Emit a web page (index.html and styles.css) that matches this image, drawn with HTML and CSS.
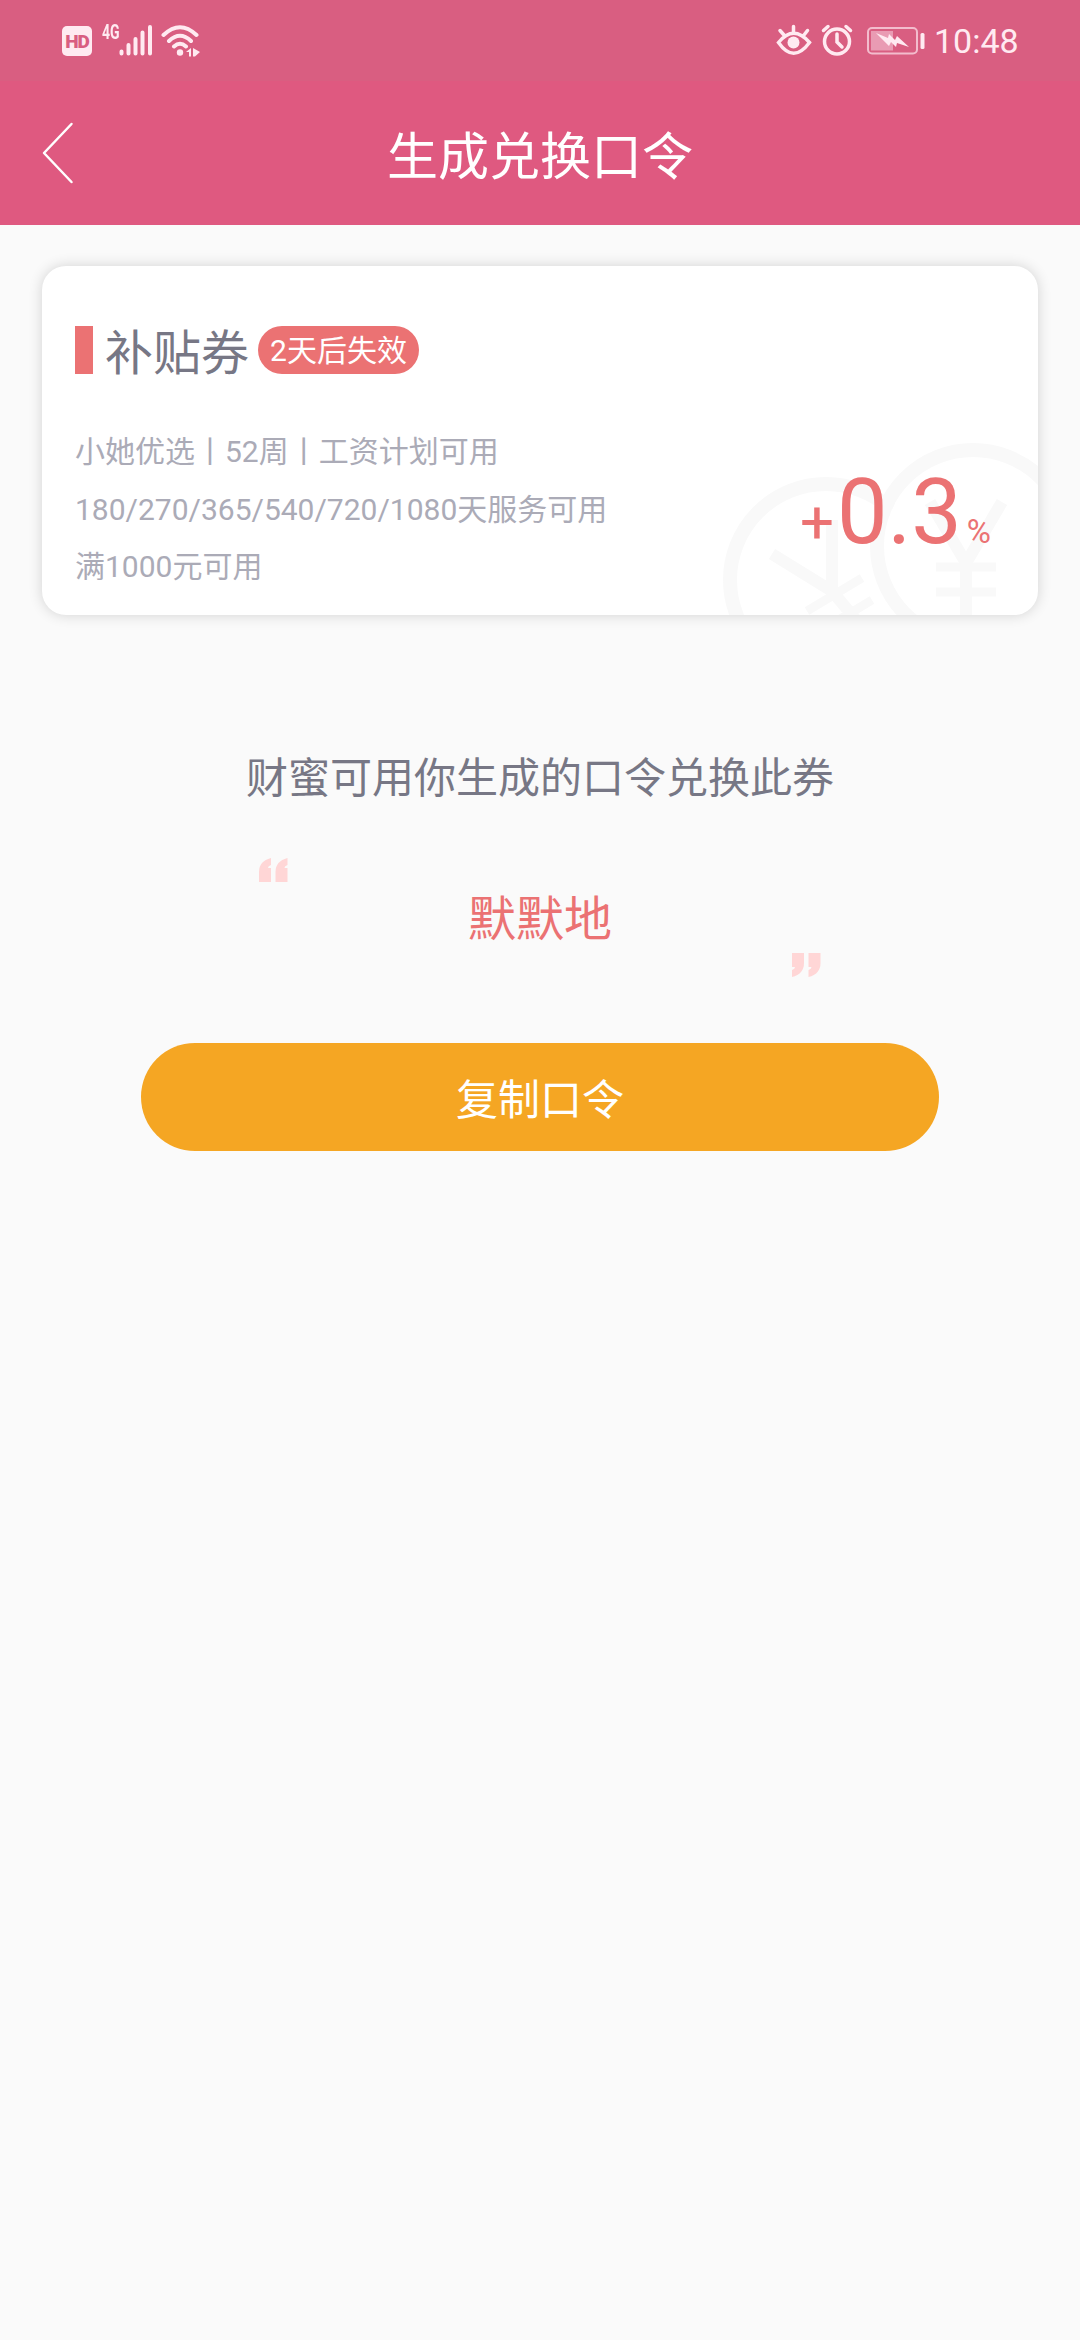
FILE: index.html
```
<!DOCTYPE html>
<html lang="zh-CN">

<head>
  <meta charset="UTF-8" />
  <meta name="viewport" content="width=device-width, initial-scale=1.0" />
  <title>生成兑换口令</title>
  <link rel="stylesheet" href="styles.css">
</head>

<body>
  <!-- 状态栏 -->
  <div class="status_bar">
    <div class="status_left">
      <span class="hd">HD</span>
      <span class="net">4G</span>
      <svg class="signal" width="34" height="32" viewBox="0 0 34 32">
        <path d="M2.5 27.5v2M9.5 21v8.500M16.500 15v14.500M23.500 8.500v21M31 3v26.500" />
      </svg>
      <svg class="wifi" width="40" height="34" viewBox="0 0 40 34">
        <path d="M2.500 11Q19 -4.500 35.500 11M8 17Q19 6.500 30 17M13 22.500Q19 17 25 22.500" />
        <circle cx="19" cy="28.500" r="3.200" />
        <path class="arrow" d="M25 28l5-4v8.500h-2V28zM32 24l7 4-5 4.500h-2z" />
      </svg>
    </div>
    <div class="status_right">
      <svg class="eye" width="36" height="32" viewBox="0 0 36 32">
        <path d="M2.500 18.500Q17.500 0 33.500 18.500Q17.500 40 2.500 18.500zM17.500 8V2.500M8 11L4 6.500M28 11l3.500-4.500" />
        <circle cx="17.500" cy="18.500" r="6" />
      </svg>
      <svg class="alarm" width="32" height="32" viewBox="0 0 32 32">
        <circle cx="16" cy="17.500" r="12.500" />
        <path d="M16 10v8l5 5M2.500 6.500L7 2.500M29.500 6.500L25 2.500" />
      </svg>
      <svg class="battery" width="59" height="28" viewBox="0 0 59 28">
        <rect class="shell" x="1" y="1" width="49" height="25.500" rx="4" />
        <rect class="level" x="4" y="4" width="22" height="19.500" />
        <path class="flash" d="M9 6l12 5 1-4 6 6 2-4 12 11-12-4-1 4-5-5-2 4z" />
        <rect class="nub" x="53.500" y="6" width="4" height="16" rx="1.500" />
      </svg>
      <span class="time">10:48</span>
    </div>
  </div>

  <!-- 顶部导航 -->
  <div class="header">
    <svg class="back" width="32" height="62" viewBox="0 0 32 62">
      <path d="M29.500 2L2 31l27.500 29" />
    </svg>
    <h1>生成兑换口令</h1>
  </div>

  <!-- 优惠券 -->
  <div class="coupon">
    <svg class="coins" width="318" height="174" viewBox="0 0 318 174">
      <mask id="cut">
        <rect width="318" height="174" fill="#fff" />
        <circle cx="253" cy="105" r="96" fill="#000" />
      </mask>
      <g mask="url(#cut)">
        <circle cx="106" cy="139" r="96" />
        <path class="yen" d="M52 113l60 37V79M112 150l30 36" />
        <path class="line" d="M142 137l-55 33M152 159l-55 33" />
      </g>
      <circle cx="253" cy="105" r="96" />
      <path class="yen" d="M210 61l36 61 36-61M246 120v60" />
      <path class="line" d="M216 126h60M216 151h60" />
    </svg>
    <div class="coupon_title">
      <span class="mark"></span>
      <h2>补贴券</h2>
      <span class="badge">2天后失效</span>
    </div>
    <div class="coupon_con">
      <ul class="rules">
        <li>小她优选丨52周丨工资计划可用</li>
        <li>180/270/365/540/720/1080天服务可用</li>
        <li>满1000元可用</li>
      </ul>
      <div class="rate">
        <span class="plus">+</span><span class="num">0.3</span><span class="percent">%</span>
      </div>
    </div>
  </div>

  <!-- 口令 -->
  <div class="command">
    <p class="tip">财蜜可用你生成的口令兑换此券</p>
    <div class="quote">
      <svg class="quote_left" width="29" height="24" viewBox="0 0 29 24">
        <path d="M0 24V14Q0 3 12 0V7Q9 8 9 10H12V24zM16.500 24V14Q16.500 3 28.500 0V7Q25.500 8 25.500 10H28.500V24z" />
      </svg>
      <p class="word">默默地</p>
      <svg class="quote_right" width="29" height="24" viewBox="0 0 29 24">
        <path d="M0 0H12V10Q12 21 0 24V17Q3 16 3 14H0zM16.500 0H28.500V10Q28.500 21 16.500 24V17Q19.500 16 19.500 14H16.500z" />
      </svg>
    </div>
    <button class="copy">复制口令</button>
  </div>
</body>

</html>
```
FILE: styles.css
```
body,
h1,
h2,
ul,
p {
  margin: 0;
  padding: 0;
  font-weight: 400;
}

body {
  min-height: 2340px;
  background-color: #fafafa;
  font-family: Roboto, "Noto Sans CJK SC", sans-serif;
  color: #777785;
}

svg {
  display: block;
  fill: none;
}

/* 状态栏 */
.status_bar {
  height: 81px;
  box-sizing: border-box;
  padding: 24px 62px 0;
  background-color: #d95e81;
  color: #ffeaf1;
  display: flex;
  justify-content: space-between;
  align-items: flex-start;
}

.status_left,
.status_right {
  display: flex;
  align-items: flex-start;
}

.hd {
  width: 30px;
  height: 30px;
  margin-top: 2px;
  border-radius: 5px;
  background-color: #ffeaf1;
  color: #d95e81;
  font-size: 19px;
  font-weight: 900;
  line-height: 31px;
  text-align: center;
  letter-spacing: -1px;
}

.net {
  width: 17px;
  margin-left: 10px;
  font-size: 20px;
  font-weight: 700;
  line-height: 16px;
  transform: scaleX(0.7);
  transform-origin: left;
}

.signal,
.wifi,
.eye,
.alarm {
  stroke: #ffeaf1;
  stroke-width: 4;
  stroke-linecap: round;
}

.wifi {
  margin-left: 8px;
}

.wifi circle,
.wifi .arrow,
.eye circle {
  fill: #ffeaf1;
  stroke: none;
}

.eye,
.alarm {
  stroke-width: 3.5;
}

.alarm {
  margin-left: 9px;
}

.battery {
  margin: 3px 0 0 14px;
}

.shell {
  stroke: #f3bccd;
  stroke-width: 2;
}

.level {
  fill: #e99bb3;
}

.flash,
.nub {
  fill: #ffeaf1;
}

.time {
  width: 84px;
  margin-left: 8px;
  font-size: 34px;
  line-height: 34px;
}

/* 导航 */
.header {
  height: 144px;
  background-color: #df5980;
  color: #fff;
  display: grid;
  grid-template-columns: 120px 1fr 120px;
  align-items: center;
}

.back {
  margin-left: 42px;
  stroke: #fff;
  stroke-width: 2.5;
  stroke-linecap: round;
  stroke-linejoin: round;
}

.header h1 {
  padding-top: 10px;
  font-size: 51px;
  line-height: 72px;
  text-align: center;
}

/* 优惠券 */
.coupon {
  height: 349px;
  box-sizing: border-box;
  margin: 41px 42px 0;
  padding: 60px 33px 0;
  border-radius: 24px;
  background-color: #fff;
  box-shadow: 0 0 14px rgba(0, 0, 0, 0.16);
  position: relative;
  overflow: hidden;
}

.coins {
  position: absolute;
  right: 0;
  bottom: 0;
  stroke: #f9f9f9;
  stroke-width: 14;
}

.coins .yen {
  stroke-width: 12;
}

.coins .line {
  stroke-width: 9;
}

.coupon_title {
  height: 48px;
  display: flex;
  align-items: center;
}

.mark {
  width: 18px;
  height: 48px;
  background-color: #eb7273;
}

.coupon_title h2 {
  padding-top: 8px;
  margin-left: 12px;
  font-size: 48px;
  line-height: 48px;
}

.badge {
  width: 161px;
  height: 48px;
  margin-left: 9px;
  border-radius: 24px;
  background-color: #eb7273;
  color: #fff;
  font-size: 30px;
  line-height: 50px;
  text-align: center;
}

.coupon_con {
  margin-top: 49px;
  display: flex;
  justify-content: space-between;
  position: relative;
}

.rules {
  list-style: none;
  color: #ababb7;
  font-size: 30px;
  line-height: 58px;
}

.rules li:last-child {
  line-height: 55px;
}

.rate {
  margin: 37px 14px 0 0;
  color: #eb7273;
  line-height: 106px;
  white-space: nowrap;
}

.plus {
  margin-right: 3px;
  font-size: 60px;
}

.num {
  font-size: 90px;
}

.percent {
  margin-left: 5px;
  font-size: 33px;
}

/* 口令 */
.command {
  padding-top: 134px;
  text-align: center;
}

.tip {
  font-size: 42px;
  line-height: 60px;
}

.quote {
  width: 563px;
  height: 119px;
  margin: 49px auto 0;
  display: flex;
  justify-content: space-between;
  align-items: center;
}

.quote svg {
  fill: #ffd6d6;
}

.quote_left {
  align-self: flex-start;
}

.quote_right {
  align-self: flex-end;
}

.word {
  padding-top: 5px;
  color: #eb7273;
  font-size: 48px;
  line-height: 70px;
}

.copy {
  display: block;
  width: 798px;
  height: 108px;
  margin: 66px auto 0;
  padding: 0 0 2px;
  border: none;
  border-radius: 54px;
  background-color: #f5a623;
  color: #fff;
  font-family: inherit;
  font-size: 42px;
}
```
